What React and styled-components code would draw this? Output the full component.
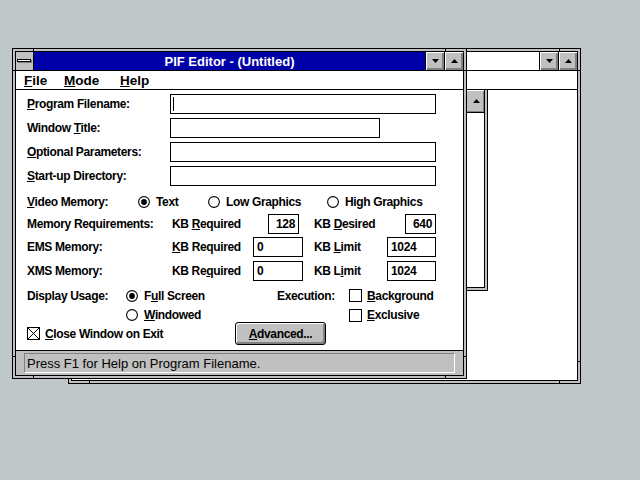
import React from 'react'
import styled, { createGlobalStyle } from 'styled-components'

const GlobalStyle = createGlobalStyle`
  html, body {
    margin: 0;
    padding: 0;
  }
  body {
    background: #c0c7c8;
    font-family: "Liberation Sans", Arial, sans-serif;
    color: #000;
  }
`

const ui = {
  Desktop: styled.div`
    position: relative;
    width: 640px;
    height: 480px;
    background: #c0c7c8;
    overflow: hidden;
  `,
  // windows sit on the desktop at their own coordinates
  Frame: styled.div`
    position: absolute;
    left: ${p => p.$x}px;
    top: ${p => p.$y}px;
    width: ${p => p.$w}px;
    height: ${p => p.$h}px;
    box-sizing: border-box;
    border: 1px solid #000;
    padding: 2px;
    display: flex;
    background-color: #c0c0c0;
    background-image:
      linear-gradient(to right, transparent 20px, #000 20px, #000 21px, transparent 21px),
      linear-gradient(to left, transparent 20px, #000 20px, #000 21px, transparent 21px),
      linear-gradient(to bottom, transparent 21px, #000 21px, #000 22px, transparent 22px),
      linear-gradient(to top, transparent 21px, #000 21px, #000 22px, transparent 22px);
  `,
  Inner: styled.div`
    flex: 1;
    min-width: 0;
    border: 1px solid #000;
    display: flex;
    flex-direction: column;
    background: #fff;
    overflow: hidden;
  `,
  TitleBar: styled.div`
    flex: none;
    display: flex;
    height: 19px;
    box-sizing: border-box;
    border-bottom: 1px solid #000;
  `,
  SysBox: styled.div`
    width: 18px;
    box-sizing: border-box;
    border-right: 1px solid #000;
    background: #c0c0c0;
    display: flex;
    align-items: center;
    justify-content: center;
  `,
  SysBar: styled.div`
    width: 12px;
    height: 1px;
    background: #fff;
    border: 1px solid #000;
    box-shadow: 1px 1px 0 #808080;
    margin: 0 1px 1px 0;
  `,
  Caption: styled.div`
    flex: 1;
    min-width: 0;
    background: ${p => (p.$active ? '#0000a8' : '#fff')};
    color: #fff;
    font-weight: bold;
    font-size: 13px;
    display: flex;
    align-items: center;
    justify-content: center;
    white-space: nowrap;
    overflow: hidden;
  `,
  CapButton: styled.div`
    width: 19px;
    box-sizing: border-box;
    border-left: 1px solid #000;
    background: #c0c0c0;
    box-shadow: inset 1px 1px 0 #fff, inset -1px -1px 0 #808080, inset -2px -2px 0 #808080;
    display: flex;
    align-items: center;
    justify-content: center;
  `,
  MenuBar: styled.div`
    flex: none;
    height: 19px;
    box-sizing: border-box;
    border-bottom: 1px solid #000;
    display: flex;
    align-items: center;
    padding-left: 8px;
    font-size: 13.5px;
    font-weight: bold;
  `,
  MenuItem: styled.span`
    flex: none;
    width: ${p => (p.$w ? `${p.$w}px` : 'auto')};
  `,
  Client: styled.div`
    flex: 1;
    min-height: 0;
    display: flex;
    flex-direction: column;
    padding: 2px 0 0 11px;
    font-size: 12px;
    font-weight: bold;
    letter-spacing: -0.35px;
    white-space: nowrap;
  `,
  BackClient: styled.div`
    flex: 1;
    display: flex;
    align-items: flex-start;
  `,
  Row: styled.div`
    flex: none;
    display: flex;
    align-items: center;
    height: ${p => p.$h || 24}px;
    margin-top: ${p => p.$mt || 0}px;
  `,
  Label: styled.div`
    flex: none;
    width: ${p => p.$w}px;
  `,
  Field: styled.div`
    flex: none;
    width: ${p => p.$w}px;
    height: 20px;
    box-sizing: border-box;
    border: 1px solid #000;
    background: #fff;
    display: flex;
    align-items: center;
    justify-content: ${p => (p.$right ? 'flex-end' : 'flex-start')};
    padding: 0 3px;
  `,
  Caret: styled.span`
    width: 1px;
    height: 14px;
    background: #000;
    margin-left: -1px;
  `,
  Option: styled.div`
    flex: none;
    width: ${p => (p.$w ? `${p.$w}px` : 'auto')};
    display: flex;
    align-items: center;
    gap: ${p => p.$gap || 6}px;
  `,
  Key: styled.span`
    text-decoration: underline;
    text-underline-offset: 1px;
    text-decoration-thickness: 1px;
  `,
  PushButton: styled.div`
    flex: none;
    width: 91px;
    height: 23px;
    box-sizing: border-box;
    border: 1px solid #000;
    border-radius: 3px;
    background: #c0c0c0;
    box-shadow: inset 1px 1px 0 #fff, inset -1px -1px 0 #808080, inset -2px -2px 0 #808080;
    display: flex;
    align-items: center;
    justify-content: center;
  `,
  StatusBar: styled.div`
    flex: none;
    height: 25px;
    box-sizing: border-box;
    border-top: 1px solid #000;
    background: #c0c0c0;
    padding: 2px 8px;
    display: flex;
  `,
  StatusPanel: styled.div`
    flex: 1;
    box-sizing: border-box;
    border-top: 1px solid #808080;
    border-left: 1px solid #808080;
    border-bottom: 1px solid #fff;
    border-right: 1px solid #fff;
    display: flex;
    align-items: center;
    padding-left: 2px;
    font-size: 13px;
    white-space: nowrap;
  `,
  ChildFrame: styled.div`
    margin-left: 391px;
    width: 25px;
    height: 201px;
    box-sizing: border-box;
    border-right: 1px solid #000;
    border-bottom: 1px solid #000;
    padding: 0 2px 2px 0;
    background: #c0c0c0;
    display: flex;
  `,
  ChildInner: styled.div`
    flex: 1;
    border-right: 1px solid #000;
    border-bottom: 1px solid #000;
    background: #fff;
    display: flex;
    flex-direction: column;
  `,
  ScrollButton: styled.div`
    height: 23px;
    box-sizing: border-box;
    border-bottom: 1px solid #000;
    background: #c0c0c0;
    box-shadow: inset 1px 1px 0 #fff, inset -1px -1px 0 #808080;
    display: flex;
    align-items: center;
    justify-content: center;
    padding-left: 5px;
  `,
}

const Arrow = ({ up }) => (
  <svg width="7" height="4" viewBox="0 0 7 4">
    <polygon points={up ? '3.5,0 7,4 0,4' : '0,0 7,0 3.5,4'} fill="#000" />
  </svg>
)

const Radio = ({ on }) => (
  <svg width="12" height="12" viewBox="0 0 12 12">
    <circle cx="6" cy="6" r="5.4" fill="#fff" stroke="#000" strokeWidth="1.1" />
    {on && <circle cx="6" cy="6" r="2.9" fill="#000" />}
  </svg>
)

const Check = ({ on }) => (
  <svg width="13" height="13" viewBox="0 0 13 13">
    <rect x="0.5" y="0.5" width="12" height="12" fill="#fff" stroke="#000" />
    {on && <path d="M1 1 L12 12 M12 1 L1 12" stroke="#000" strokeWidth="1" />}
  </svg>
)

const TitleButtons = () => (
  <>
    <ui.CapButton><Arrow /></ui.CapButton>
    <ui.CapButton><Arrow up /></ui.CapButton>
  </>
)

const App = () => (
  <ui.Desktop>
    <GlobalStyle />

    <ui.Frame $x={68} $y={48} $w={513} $h={336}>
      <ui.Inner>
        <ui.TitleBar>
          <ui.SysBox><ui.SysBar /></ui.SysBox>
          <ui.Caption />
          <TitleButtons />
        </ui.TitleBar>
        <ui.MenuBar />
        <ui.BackClient>
          <ui.ChildFrame>
            <ui.ChildInner>
              <ui.ScrollButton><Arrow up /></ui.ScrollButton>
            </ui.ChildInner>
          </ui.ChildFrame>
        </ui.BackClient>
      </ui.Inner>
    </ui.Frame>

    <ui.Frame $x={12} $y={48} $w={455} $h={331}>
      <ui.Inner>
        <ui.TitleBar>
          <ui.SysBox><ui.SysBar /></ui.SysBox>
          <ui.Caption $active>PIF Editor - (Untitled)</ui.Caption>
          <TitleButtons />
        </ui.TitleBar>

        <ui.MenuBar>
          <ui.MenuItem $w={40}><ui.Key>F</ui.Key>ile</ui.MenuItem>
          <ui.MenuItem $w={56}><ui.Key>M</ui.Key>ode</ui.MenuItem>
          <ui.MenuItem><ui.Key>H</ui.Key>elp</ui.MenuItem>
        </ui.MenuBar>

        <ui.Client>
          <ui.Row>
            <ui.Label $w={143}><ui.Key>P</ui.Key>rogram Filename:</ui.Label>
            <ui.Field $w={266}><ui.Caret /></ui.Field>
          </ui.Row>
          <ui.Row>
            <ui.Label $w={143}>Window <ui.Key>T</ui.Key>itle:</ui.Label>
            <ui.Field $w={210} />
          </ui.Row>
          <ui.Row>
            <ui.Label $w={143}><ui.Key>O</ui.Key>ptional Parameters:</ui.Label>
            <ui.Field $w={266} />
          </ui.Row>
          <ui.Row>
            <ui.Label $w={143}><ui.Key>S</ui.Key>tart-up Directory:</ui.Label>
            <ui.Field $w={266} />
          </ui.Row>

          <ui.Row $mt={2}>
            <ui.Label $w={111}><ui.Key>V</ui.Key>ideo Memory:</ui.Label>
            <ui.Option $w={70}><Radio on /><span>Text</span></ui.Option>
            <ui.Option $w={119}><Radio /><span>Low Graphics</span></ui.Option>
            <ui.Option><Radio /><span>High Graphics</span></ui.Option>
          </ui.Row>

          <ui.Row $h={20}>
            <ui.Label $w={145}>Memory Requirements:</ui.Label>
            <ui.Label $w={96}>KB <ui.Key>R</ui.Key>equired</ui.Label>
            <ui.Field $w={31} $right>128</ui.Field>
            <ui.Label $w={15} />
            <ui.Label $w={91}>KB <ui.Key>D</ui.Key>esired</ui.Label>
            <ui.Field $w={31} $right>640</ui.Field>
          </ui.Row>

          <ui.Row $h={20} $mt={3}>
            <ui.Label $w={145}>EMS Memory:</ui.Label>
            <ui.Label $w={81}><ui.Key>K</ui.Key>B Required</ui.Label>
            <ui.Field $w={50}>0</ui.Field>
            <ui.Label $w={11} />
            <ui.Label $w={73}>KB <ui.Key>L</ui.Key>imit</ui.Label>
            <ui.Field $w={49}>1024</ui.Field>
          </ui.Row>

          <ui.Row $h={20} $mt={4}>
            <ui.Label $w={145}>XMS Memory:</ui.Label>
            <ui.Label $w={81}>KB Re<ui.Key>q</ui.Key>uired</ui.Label>
            <ui.Field $w={50}>0</ui.Field>
            <ui.Label $w={11} />
            <ui.Label $w={73}>KB L<ui.Key>i</ui.Key>mit</ui.Label>
            <ui.Field $w={49}>1024</ui.Field>
          </ui.Row>

          <ui.Row $h={21} $mt={4}>
            <ui.Label $w={99}>Display Usage:</ui.Label>
            <ui.Option $w={151}><Radio on /><span>F<ui.Key>u</ui.Key>ll Screen</span></ui.Option>
            <ui.Label $w={72}>Execution:</ui.Label>
            <ui.Option $gap={5}><Check /><span><ui.Key>B</ui.Key>ackground</span></ui.Option>
          </ui.Row>

          <ui.Row $h={18}>
            <ui.Label $w={99} />
            <ui.Option $w={151}><Radio /><span><ui.Key>W</ui.Key>indowed</span></ui.Option>
            <ui.Label $w={72} />
            <ui.Option $gap={5}><Check /><span><ui.Key>E</ui.Key>xclusive</span></ui.Option>
          </ui.Row>

          <ui.Row $h={23} $mt={-2}>
            <ui.Option $w={208} $gap={5}><Check on /><span><ui.Key>C</ui.Key>lose Window on Exit</span></ui.Option>
            <ui.PushButton><span><ui.Key>A</ui.Key>dvanced...</span></ui.PushButton>
          </ui.Row>
        </ui.Client>

        <ui.StatusBar>
          <ui.StatusPanel>Press F1 for Help on Program Filename.</ui.StatusPanel>
        </ui.StatusBar>
      </ui.Inner>
    </ui.Frame>
  </ui.Desktop>
)

export default App
